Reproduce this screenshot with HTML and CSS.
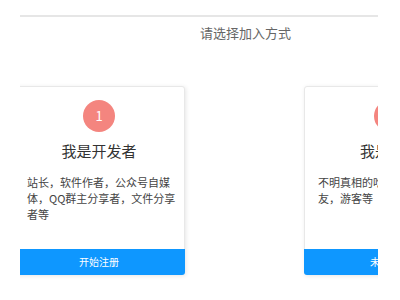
FILE: index.html
```html
<!DOCTYPE html>
<html lang="zh">
<head>
<meta charset="utf-8">
<link rel="stylesheet" href="styles.css">
</head>
<body>
<div class="frame">
  <div class="rule"></div>
  <div class="heading">请选择加入方式</div>
  <div class="cards">
    <div class="card">
      <div class="num">1</div>
      <div class="title">我是开发者</div>
      <div class="desc">站长，软件作者，公众号自媒体，QQ群主分享者，文件分享者等</div>
      <div class="btn">开始注册</div>
    </div>
    <div class="card">
      <div class="num">2</div>
      <div class="title">我是访客</div>
      <div class="desc">不明真相的吃瓜群众，亲朋好友，游客等</div>
      <div class="btn">未来再说</div>
    </div>
  </div>
</div>
</body>
</html>
```
FILE: styles.css
```css
html, body {
  margin: 0;
  padding: 0;
  background: #fff;
}
body {
  font-family: "Noto Sans CJK SC", "Noto Sans", sans-serif;
  color: #333;
}
.frame {
  width: 358px;
  margin-left: 20px;
  padding-top: 15px;
  overflow: hidden;
  height: 280px;
}
.rule {
  height: 2px;
  background: #e6e6e6;
}
.heading {
  padding-left: 180px;
  margin-top: 1px;
  font-size: 13px;
  line-height: 30px;
  color: #666;
}
.cards {
  display: flex;
  gap: 119px;
  margin-top: 38px;
  padding-bottom: 6px;
}
.card {
  flex: 0 0 172px;
  height: 189px;
  box-sizing: border-box;
  display: flex;
  flex-direction: column;
  align-items: center;
  border: 1px solid #e8e8e8;
  border-radius: 3px;
  box-shadow: 1px 1px 4px rgba(0, 0, 0, 0.1);
  background: #fff;
}
.card:first-child {
  margin-left: -7px;
}
.num {
  width: 32px;
  height: 32px;
  margin-top: 13px;
  border-radius: 50%;
  background: #f4857f;
  color: #fff;
  font-size: 13px;
  line-height: 32px;
  text-align: center;
}
.title {
  margin-top: 9px;
  font-size: 15px;
  line-height: 20px;
  color: #333;
}
.desc {
  align-self: stretch;
  margin-top: 13px;
  padding: 0 6px 0 13px;
  font-size: 11px;
  line-height: 16px;
  color: #444;
}
.btn {
  margin-top: auto;
  align-self: stretch;
  margin-left: -1px;
  margin-right: -1px;
  margin-bottom: -1px;
  height: 26px;
  line-height: 26px;
  background: #0e97ff;
  color: #fff;
  font-size: 10px;
  text-align: center;
  border-radius: 0 0 3px 3px;
}
```
